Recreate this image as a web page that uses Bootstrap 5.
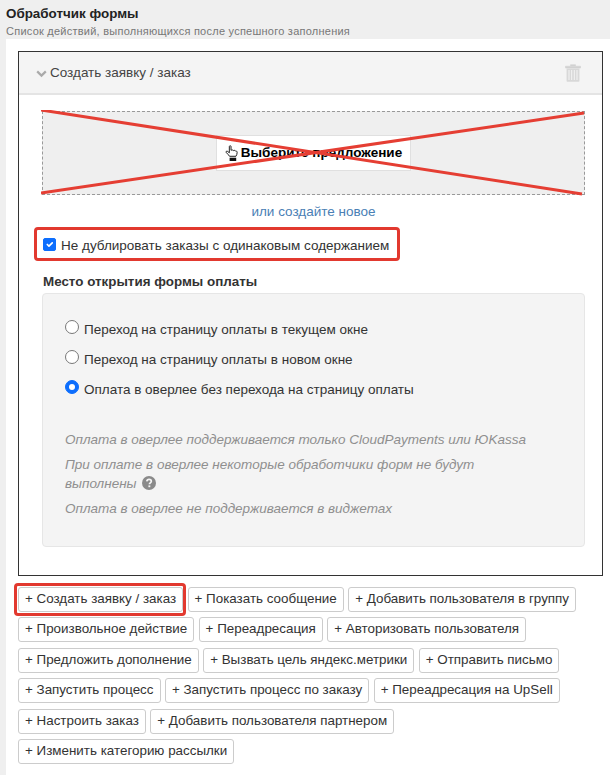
<!DOCTYPE html>
<html lang="en">
<head>
  <meta charset="UTF-8" />
  <meta name="viewport" content="width=device-width, initial-scale=1.0"/>
  <title>Обработчик формы</title>
  <link href="https://cdn.jsdelivr.net/npm/bootstrap@5.3.0/dist/css/bootstrap.min.css" rel="stylesheet"/>
  <style>
    body {
      background-color: #efefef;
      font-family: "Liberation Sans", Arial, sans-serif;
      font-size: 13.5px;
      line-height: 20px;
      color: #333;
      margin: 0;
    }
    .top-head {
      height: 39px;
      padding: 6px 0 0 6px;
    }
    .top-title {
      font-weight: 700;
      font-size: 13.4px;
      line-height: 16px;
      color: #222;
    }
    .top-sub {
      font-size: 11px;
      line-height: 14px;
      margin-top: 2px;
      color: #777;
      letter-spacing: .24px;
    }
    .panel-area {
      margin-left: 6px;
      background: #fff;
      padding: 12px 7px 14px 12px;
      height: 736px;
    }
    .action-box {
      border: 1px solid #333;
      border-radius: 0;
      height: 525px;
    }
    .action-head {
      height: 43px;
      background: #f4f4f4;
      border-bottom: 2px solid #e4e4e4;
      padding: 0 21px 0 17px;
      color: #444;
    }
    .chev { margin-right: 3px; margin-top: 2px; }
    .action-body { padding: 16px 17px 0 23px; }
    .drop-zone {
      height: 84px;
      background: #efefef;
      border: 1px dashed #999;
    }
    .pick-btn {
      width: 195px;
      height: 36px;
      background: #fff;
      border: 1px solid #e0e0e0;
      font-weight: 700;
      color: #000;
      gap: 3px;
    }
    .x-lines {
      position: absolute;
      left: -2px;
      top: -2px;
      width: 545px;
      height: 87px;
      pointer-events: none;
    }
    .make-link {
      color: #4a80b5;
      text-decoration: none;
      line-height: 20px;
      margin-top: 7px;
    }
    a.make-link { margin-top: 0; }
    .dup-row {
      margin: 14px 0 0 1px;
      min-height: 20px;
      padding-left: 18px;
      position: relative;
    }
    .dup-row .form-check-input {
      width: 13px;
      height: 13px;
      margin: 2px 0 0 -18px;
      border-radius: 2px;
    }
    .dup-row label { padding-left: 0; margin-left: 0; }
    .red-frame {
      position: absolute;
      border: 3px solid #e2392f;
      border-radius: 4px;
      pointer-events: none;
    }
    .dup-frame { left: -9px; top: -9px; width: 366px; height: 34px; }
    .pay-title {
      font-weight: 700;
      font-size: 13.4px;
      color: #333;
      line-height: 20px;
      margin: 16px 0 0 1px;
    }
    .pay-well {
      height: 254px;
      margin-top: 1px;
      background: #f4f4f4;
      border: 1px solid #e6e6e6;
      border-radius: 4px;
      padding: 23px 22px 0 22px;
    }
    .pay-opt {
      min-height: 20px;
      height: 20px;
      margin-bottom: 10px;
      padding-left: 19px;
    }
    .pay-opt label { line-height: 26px; display: block; }
    .pay-opt .form-check-input {
      width: 14px;
      height: 14px;
      margin: 3px 0 0 -19px;
    }
    .pay-opt .form-check-input:not(:checked) { border: 1px solid #777; background-color: #fff; }
    .pay-note {
      font-style: italic;
      color: #8f8f8f;
      line-height: 19px;
      margin-bottom: 6px;
    }
    .pay-notes { margin-top: 33px; padding-right: 25px; }
    .qmark { vertical-align: -2px; margin-left: 2px; }
    .add-list { margin-top: 11px; font-size: 0; }
    .add-btn {
      display: inline-block;
      font-size: 13.4px;
      line-height: 22px;
      height: 25px;
      padding: 0 6px;
      margin: 0 4.4px 5.4px 0;
      border: 1px solid #ccc;
      border-radius: 3px;
      background: #fff;
      color: #333;
    }
    .add-btn:hover { background: #fff; border-color: #ccc; color: #333; }
    .add-wrap { position: relative; display: inline-block; }
    .btn-frame { left: -4px; top: -4px; width: 172px; height: 33px; }
  </style>
</head>
<body>
  <div class="top-head">
    <div class="top-title">Обработчик формы</div>
    <div class="top-sub">Список действий, выполняющихся после успешного заполнения</div>
  </div>

  <div class="panel-area">
    <div class="card action-box">
      <div class="action-head d-flex align-items-center justify-content-between">
        <div class="d-flex align-items-center">
          <svg class="chev" width="11" height="8" viewBox="0 0 11 8"><path d="M1.2 1.4 5.5 5.6 9.8 1.4" fill="none" stroke="#aaa" stroke-width="2.2"/></svg>
          <span>Создать заявку / заказ</span>
        </div>
        <svg width="16" height="18" viewBox="0 0 16 18">
          <path d="M5.5 2V.7h5V2M.5 2.2h15V4H.5z" fill="#d2d2d2" stroke="#d2d2d2" stroke-width=".6"/>
          <path d="M1.6 4.6h12.8V17a.8.8 0 0 1-.8.8H2.4a.8.8 0 0 1-.8-.8z" fill="#d8d8d8"/>
          <path d="M4 6v10M6.7 6v10M9.3 6v10M12 6v10" stroke="#f4f4f4" stroke-width="1"/>
        </svg>
      </div>
      <div class="action-body">
        <div class="drop-zone d-flex align-items-center justify-content-center position-relative">
          <div class="pick-btn d-flex align-items-center justify-content-center">
            <svg width="13" height="16" viewBox="0 0 13 17">
              <path d="M4.2 1.600c0-1.100 1.800-1.100 1.800 0v4c1.100-.5 2-.3 2.400.3 1-.5 1.800-.2 2.200.5 1-.3 1.900.3 1.900 1.500 0 1.700-.6 3-1.300 4.100H4.400C3.600 10.600 2.500 9.600 1 8.100c-.9-1 .3-2.100 1.400-1.300l1.800 1.500z" fill="#fff" stroke="#111" stroke-width="1"/>
              <rect x="4.500" y="13.500" width="7" height="3.500" fill="#111"/>
            </svg>
            <span>Выберите предложение</span>
          </div>
          <svg class="x-lines" viewBox="0 0 545 87">
            <path d="M0 0 541 84M0 83 543 3" fill="none" stroke="#e53e33" stroke-width="3"/>
          </svg>
        </div>
        <div class="text-center make-link"><a class="make-link" href="#">или создайте новое</a></div>

        <div class="form-check dup-row">
          <input class="form-check-input" type="checkbox" id="dupCheck" checked>
          <label class="form-check-label" for="dupCheck">Не дублировать заказы с одинаковым содержанием</label>
          <div class="red-frame dup-frame"></div>
        </div>

        <div class="pay-title">Место открытия формы оплаты</div>
        <div class="pay-well">
          <div class="form-check pay-opt">
            <input class="form-check-input" type="radio" name="payPlace" id="pay1">
            <label class="form-check-label" for="pay1">Переход на страницу оплаты в текущем окне</label>
          </div>
          <div class="form-check pay-opt">
            <input class="form-check-input" type="radio" name="payPlace" id="pay2">
            <label class="form-check-label" for="pay2">Переход на страницу оплаты в новом окне</label>
          </div>
          <div class="form-check pay-opt">
            <input class="form-check-input" type="radio" name="payPlace" id="pay3" checked>
            <label class="form-check-label" for="pay3">Оплата в оверлее без перехода на страницу оплаты</label>
          </div>
          <div class="pay-notes">
            <div class="pay-note">Оплата в оверлее поддерживается только CloudPayments или ЮKassa</div>
            <div class="pay-note">При оплате в оверлее некоторые обработчики форм не будут выполнены
              <svg class="qmark" width="14" height="14" viewBox="0 0 14 14">
                <circle cx="7" cy="7" r="7" fill="#8a8a8a"/>
                <path d="M4.800 5.300C5 4 6 3.400 7.100 3.400c1.300 0 2.200.8 2.200 1.900 0 1.500-1.900 1.600-1.900 3" fill="none" stroke="#f4f4f4" stroke-width="1.700"/>
                <rect x="6.400" y="9.400" width="1.900" height="1.800" fill="#f4f4f4"/>
              </svg>
            </div>
            <div class="pay-note">Оплата в оверлее не поддерживается в виджетах</div>
          </div>
        </div>
      </div>
    </div>

    <div class="add-list">
      <span class="add-wrap"><a class="btn add-btn" href="#">+ Создать заявку / заказ</a><span class="red-frame btn-frame"></span></span>
      <a class="btn add-btn" href="#">+ Показать сообщение</a>
      <a class="btn add-btn" href="#">+ Добавить пользователя в группу</a>
      <a class="btn add-btn" href="#">+ Произвольное действие</a>
      <a class="btn add-btn" href="#">+ Переадресация</a>
      <a class="btn add-btn" href="#">+ Авторизовать пользователя</a>
      <a class="btn add-btn" href="#">+ Предложить дополнение</a>
      <a class="btn add-btn" href="#">+ Вызвать цель яндекс.метрики</a>
      <a class="btn add-btn" href="#">+ Отправить письмо</a>
      <a class="btn add-btn" href="#">+ Запустить процесс</a>
      <a class="btn add-btn" href="#">+ Запустить процесс по заказу</a>
      <a class="btn add-btn" href="#">+ Переадресация на UpSell</a>
      <a class="btn add-btn" href="#">+ Настроить заказ</a>
      <a class="btn add-btn" href="#">+ Добавить пользователя партнером</a>
      <a class="btn add-btn" href="#">+ Изменить категорию рассылки</a>
    </div>
  </div>

  <script src="https://cdn.jsdelivr.net/npm/bootstrap@5.3.0/dist/js/bootstrap.bundle.min.js"></script>
</body>
</html>
